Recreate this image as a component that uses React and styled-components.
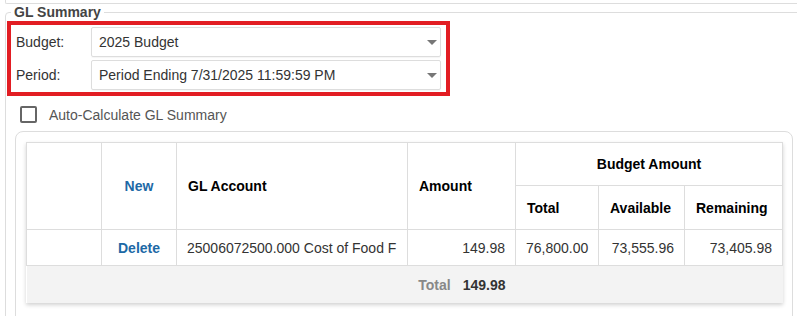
import React from 'react';
import styled, { createGlobalStyle } from 'styled-components';

const GlobalStyle = createGlobalStyle`
  html, body {
    margin: 0;
    padding: 0;
    background: #fff;
  }
  body {
    font-family: "Liberation Sans", Arial, sans-serif;
    font-size: 14px;
    color: #333;
    overflow: hidden;
  }
`;

const Page = styled.div`
  padding-left: 5px;
  width: 830px;
`;

const PrevPanel = styled.div`
  height: 3px;
  border-left: 1px solid #ddd;
  border-bottom: 1px solid #ddd;
  border-bottom-left-radius: 2px;
`;

const Fieldset = styled.fieldset`
  margin: 0;
  padding: 0 0 20px 1px;
  border: 1px solid #ddd;
  border-radius: 4px;
  min-width: 0;
`;

const Legend = styled.legend`
  margin-left: 4px;
  padding: 0 3px;
  font-size: 14px;
  line-height: 16px;
  font-weight: bold;
  color: #444;
`;

const Highlight = styled.div`
  width: 425px;
  margin-top: 1px;
  border: 4px solid #e21d23;
  padding: 2px 5px;
  display: flex;
  flex-direction: column;
  gap: 3px;
`;

const FieldRow = styled.div`
  display: flex;
  align-items: center;
`;

const Label = styled.span`
  width: 75px;
  color: #333;
`;

const Select = styled.div`
  position: relative;
  flex: 1;
  height: 28px;
  border: 1px solid #ddd;
  border-radius: 2px;
  box-shadow: 0 1px 1px rgba(0, 0, 0, 0.04);
  display: flex;
  align-items: center;
  padding-left: 7px;
  color: #333;

  &::after {
    content: '';
    position: absolute;
    right: 3px;
    top: 12px;
    border-left: 5px solid transparent;
    border-right: 5px solid transparent;
    border-top: 5px solid #777;
  }
`;

const CheckRow = styled.label`
  display: flex;
  align-items: center;
  gap: 12px;
  margin: 10px 0 0 13px;
  color: #555;
`;

const Box = styled.span`
  width: 13px;
  height: 13px;
  border: 2px solid #666;
  border-radius: 2px;
`;

const Frame = styled.div`
  width: 756px;
  margin: 8px 0 0 8px;
  border: 1px solid #ddd;
  border-radius: 8px;
  padding: 10px 10px 30px;
`;

const Table = styled.table`
  width: 756px;
  border-collapse: collapse;
  table-layout: fixed;
  box-shadow: 0 2px 4px rgba(0, 0, 0, 0.18);
  font-size: 14px;
`;

const Th = styled.th`
  border: 1px solid #ddd;
  padding: 0 11px;
  color: #000;
  font-weight: bold;
  text-align: ${p => p.$align || 'left'};
  height: ${p => p.$h || 42}px;
`;

const Td = styled.td`
  border: 1px solid #ddd;
  padding: 0 10px;
  height: 35px;
  color: #333;
  white-space: nowrap;
  overflow: hidden;
  text-align: ${p => p.$align || 'left'};
`;

const Link = styled.span`
  color: #1d69a6;
  font-weight: bold;
`;

const TotalRow = styled.tr`
  background: #f3f3f3;
  td {
    border: none;
    border-top: 1px solid #ddd;
    height: 35px;
  }
`;

const TotalLabel = styled.span`
  color: #888;
  font-weight: bold;
  margin-right: 12px;
`;

const TotalValue = styled.span`
  color: #333;
  font-weight: bold;
`;

export default function App() {
  return (
    <>
      <GlobalStyle />
      <Page>
        <PrevPanel />
        <Fieldset>
          <Legend>GL Summary</Legend>
          <Highlight>
            <FieldRow>
              <Label>Budget:</Label>
              <Select>2025 Budget</Select>
            </FieldRow>
            <FieldRow>
              <Label>Period:</Label>
              <Select>Period Ending 7/31/2025 11:59:59 PM</Select>
            </FieldRow>
          </Highlight>
          <CheckRow>
            <Box />
            Auto-Calculate GL Summary
          </CheckRow>
          <Frame>
            <Table>
              <colgroup>
                <col style={{ width: 75 }} />
                <col style={{ width: 75 }} />
                <col style={{ width: 231 }} />
                <col style={{ width: 108 }} />
                <col style={{ width: 83 }} />
                <col style={{ width: 86 }} />
                <col style={{ width: 98 }} />
              </colgroup>
              <thead>
                <tr>
                  <Th rowSpan={2} />
                  <Th rowSpan={2} $align="center"><Link>New</Link></Th>
                  <Th rowSpan={2}>GL Account</Th>
                  <Th rowSpan={2}>Amount</Th>
                  <Th colSpan={3} $align="center">Budget Amount</Th>
                </tr>
                <tr>
                  <Th $h={43}>Total</Th>
                  <Th $h={43}>Available</Th>
                  <Th $h={43}>Remaining</Th>
                </tr>
              </thead>
              <tbody>
                <tr>
                  <Td />
                  <Td $align="center"><Link>Delete</Link></Td>
                  <Td>25006072500.000 Cost of Food F</Td>
                  <Td $align="right">149.98</Td>
                  <Td $align="right">76,800.00</Td>
                  <Td $align="right">73,555.96</Td>
                  <Td $align="right">73,405.98</Td>
                </tr>
                <TotalRow>
                  <td colSpan={3} />
                  <Td $align="right">
                    <TotalLabel>Total</TotalLabel>
                    <TotalValue>149.98</TotalValue>
                  </Td>
                  <td colSpan={3} />
                </TotalRow>
              </tbody>
            </Table>
          </Frame>
        </Fieldset>
      </Page>
    </>
  );
}
